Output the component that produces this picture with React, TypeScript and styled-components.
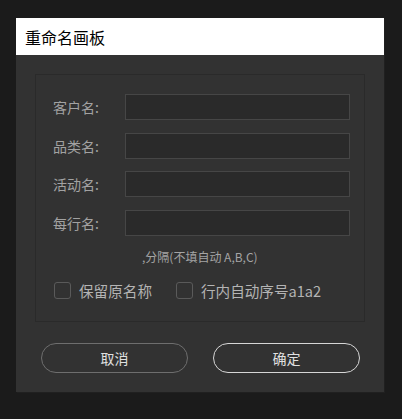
import styled, { createGlobalStyle } from 'styled-components'

const Global = createGlobalStyle`
  html, body {
    margin: 0;
    padding: 0;
    background: #1b1b1b;
    font-family: "Noto Sans CJK SC", "Noto Sans", sans-serif;
  }
`

const Page = styled.div`
  padding: 18px 0 0 16px;
  height: 419px;
  box-sizing: border-box;
`

const Dialog = styled.div`
  width: 368px;
  background: #323232;
  box-shadow: 1px 1px 0 #202020;
`

const TitleBar = styled.div`
  height: 37px;
  background: #ffffff;
  display: flex;
  align-items: center;
  padding-left: 9px;
  font-size: 16px;
  color: #000;
`

const Body = styled.div`
  padding: 19px;
`

const Panel = styled.div`
  border: 1px solid #2a2a2a;
  padding: 19px 14px 20px 17px;
  display: flex;
  flex-direction: column;
`

const Fields = styled.div`
  display: flex;
  flex-direction: column;
  gap: 12.7px;
`

const Row = styled.div`
  display: flex;
  align-items: center;
  height: 26px;
`

const Label = styled.label`
  width: 72px;
  font-size: 14px;
  color: #a2a2a2;
`

const Input = styled.input`
  flex: 1;
  height: 26px;
  box-sizing: border-box;
  background: #2a2a2a;
  border: 1px solid #464646;
  outline: none;
  color: #ddd;
`

const Hint = styled.div`
  margin: 13px 0 0 89px;
  font-size: 12px;
  line-height: 16px;
  color: #a4a4a4;
`

const Checks = styled.div`
  display: flex;
  align-items: center;
  margin-top: 15px;
  padding-left: 1px;
`

const Check = styled.label<{ $gap?: number }>`
  display: flex;
  align-items: center;
  margin-right: ${p => p.$gap ?? 0}px;
  font-size: 14.6px;
  color: #b4b4b4;
`

const Box = styled.span`
  width: 15px;
  height: 15px;
  border: 1px solid #5a5a5a;
  border-radius: 3px;
  margin-right: 8px;
`

const Buttons = styled.div`
  display: flex;
  justify-content: space-between;
  margin-top: 21px;
  padding: 0 5px 0 6px;
`

const Button = styled.button<{ $primary?: boolean }>`
  width: 147px;
  height: 30px;
  border-radius: 15px;
  background: transparent;
  border: 1px solid ${p => (p.$primary ? '#d6d6d6' : '#6e6e6e')};
  color: #e0e0e0;
  font-size: 14px;
  font-family: inherit;
`

export default function App() {
  const fields = ['客户名:', '品类名:', '活动名:', '每行名:']
  return (
    <Page>
      <Global />
      <Dialog>
        <TitleBar>重命名画板</TitleBar>
        <Body>
          <Panel>
            <Fields>
              {fields.map(f => (
                <Row key={f}>
                  <Label>{f}</Label>
                  <Input />
                </Row>
              ))}
            </Fields>
            <Hint>,分隔(不填自动 A,B,C)</Hint>
            <Checks>
              <Check $gap={24}>
                <Box />
                保留原名称
              </Check>
              <Check>
                <Box />
                行内自动序号a1a2
              </Check>
            </Checks>
          </Panel>
          <Buttons>
            <Button>取消</Button>
            <Button $primary>确定</Button>
          </Buttons>
        </Body>
      </Dialog>
    </Page>
  )
}
